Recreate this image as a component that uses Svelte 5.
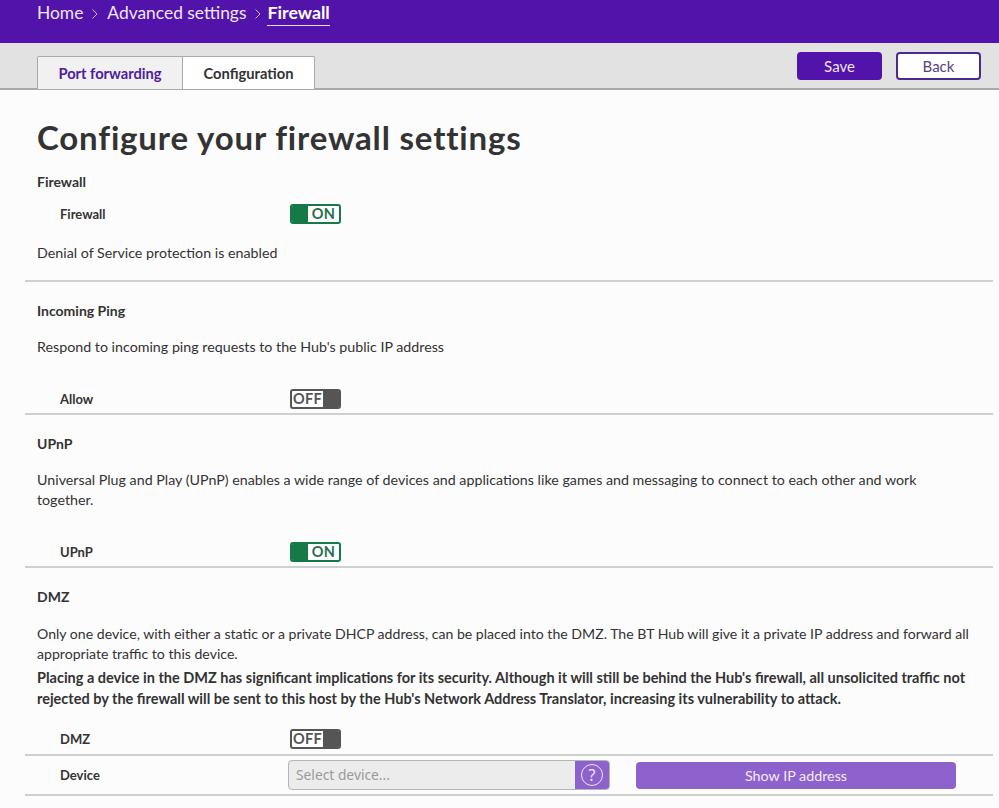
<script>
  const crumbs = ['Home', 'Advanced settings'];
</script>

<div class="page">
  <header class="top">
    <nav class="crumbs">
      {#each crumbs as c}
        <span class="crumb">{c}</span>
        <svg class="chev" width="8" height="12" viewBox="0 0 8 12"><path d="M1.5 1.5 6 6l-4.500 4.500" fill="none" stroke="#c9b3e8" stroke-width="1"/></svg>
      {/each}
      <span class="crumb current">Firewall</span>
    </nav>
  </header>

  <div class="tabbar">
    <div class="tabs">
      <div class="tab inactive">Port forwarding</div>
      <div class="tab active">Configuration</div>
    </div>
    <div class="actions">
      <button class="btn save">Save</button>
      <button class="btn back">Back</button>
    </div>
  </div>

  <main>
    <h1>Configure your firewall settings</h1>

    <section class="s1">
      <h2 class="h-first">Firewall</h2>
      <div class="row r-firewall">
        <span class="label">Firewall</span>
        <span class="toggle on"><i></i><b>ON</b></span>
      </div>
      <p class="dos">Denial of Service protection is enabled</p>
    </section>

    <section class="s2">
      <h2>Incoming Ping</h2>
      <p>Respond to incoming ping requests to the Hub's public IP address</p>
      <div class="row">
        <span class="label">Allow</span>
        <span class="toggle off"><b>OFF</b><i></i></span>
      </div>
    </section>

    <section class="s3">
      <h2>UPnP</h2>
      <p>Universal Plug and Play (UPnP) enables a wide range of devices and applications like games and messaging to connect to each other and work together.</p>
      <div class="row">
        <span class="label">UPnP</span>
        <span class="toggle on"><i></i><b>ON</b></span>
      </div>
    </section>

    <section class="s4">
      <h2>DMZ</h2>
      <p class="intro">Only one device, with either a static or a private DHCP address, can be placed into the DMZ. The BT Hub will give it a private IP address and forward all appropriate traffic to this device.</p>
      <p class="warn">Placing a device in the DMZ has significant implications for its security. Although it will still be behind the Hub's firewall, all unsolicited traffic not rejected by the firewall will be sent to this host by the Hub's Network Address Translator, increasing its vulnerability to attack.</p>
      <div class="row">
        <span class="label">DMZ</span>
        <span class="toggle off"><b>OFF</b><i></i></span>
      </div>
    </section>

    <section class="s5">
      <div class="row device">
        <span class="label">Device</span>
        <div class="select">
          <span class="ph">Select device...</span>
          <span class="help">
            <svg width="24" height="24" viewBox="0 0 24 24">
              <circle cx="12" cy="12" r="10.500" fill="none" stroke="#efe6fa" stroke-width="1"/>
              <text x="12" y="17.500" text-anchor="middle" class="q">?</text>
            </svg>
          </span>
        </div>
        <button class="btn show">Show IP address</button>
      </div>
    </section>
  </main>
</div>

<style>
  :global(body) {
    margin: 0;
    background: #fcfcfc;
  }
  .page {
    font-family: Lato, "Open Sans", sans-serif;
    color: #333;
    height: 808px;
    overflow: hidden;
  }
  .top {
    height: 43px;
    background: #5213aa;
    box-sizing: border-box;
    padding-left: 37px;
  }
  .crumbs {
    display: flex;
    align-items: flex-start;
    gap: 8px;
    color: #efe6fa;
    font-size: 17.400px;
    line-height: 25px;
  }
  .chev {
    margin-top: 8px;
  }
  .crumb.current {
    color: #fff;
    font-weight: 700;
    font-size: 17.800px;
    border-bottom: 1px solid #e6dcf5;
    height: 25px;
    margin-left: -3px;
  }
  .tabbar {
    height: 47px;
    box-sizing: border-box;
    background: #e2e2e2;
    border-bottom: 2px solid #a9a9a9;
    padding-left: 37px;
    display: flex;
    justify-content: space-between;
  }
  .tabs {
    display: flex;
    padding-top: 13px;
    height: 32px;
  }
  .tab {
    height: 32px;
    border: 1px solid #a9a9a9;
    border-bottom: none;
    font-size: 14.700px;
    font-weight: 700;
    line-height: 32px;
    text-align: center;
  }
  .tab.inactive {
    width: 144px;
    background: #f1f1f1;
    color: #4f1ba0;
    border-radius: 2px 0 0 0;
  }
  .tab.active {
    width: 131px;
    background: #fff;
    color: #333;
    border-left: none;
    border-radius: 0 2px 0 0;
  }
  .actions {
    display: flex;
    gap: 14px;
    padding: 9px 18px 0 0;
    align-items: flex-start;
  }
  .btn {
    font-family: inherit;
    font-size: 15px;
    border-radius: 4px;
    box-sizing: border-box;
    padding: 0;
    height: 28px;
    width: 85px;
  }
  .save {
    background: #5213aa;
    border: none;
    color: #efe6fa;
  }
  .back {
    background: #fff;
    border: 2px solid #4a2a8c;
    color: #55437f;
  }
  h1 {
    margin: 0;
    padding: 28px 0 0 37px;
    font-size: 33px;
    line-height: 38px;
    font-weight: 700;
    color: #333;
    letter-spacing: 0.83px;
  }
  section {
    margin-left: 25px;
    margin-right: 6px;
    padding-left: 12px;
    box-sizing: border-box;
    border-bottom: 2px solid #cfcfcf;
  }
  h2 {
    margin: 0;
    font-size: 14px;
    line-height: 18px;
    font-weight: 700;
    color: #333;
    padding-top: 20px;
  }
  h2.h-first {
    padding-top: 17px;
  }
  p {
    margin: 0;
    font-size: 14.250px;
    line-height: 20px;
    color: #333;
  }
  .s1 { height: 126px; }
  .s1 .r-firewall { margin-top: 11px; height: 24px; }
  .dos { margin-top: 17px; }
  .s2 { height: 133px; }
  .s2 p { margin-top: 17px; }
  .s2 .row { margin-top: 31px; }
  .s3 { height: 153px; }
  .s3 p { margin-top: 17px; padding-right: 60px; }
  .s3 .row { margin-top: 31px; }
  .s4 { height: 188px; }
  .s4 p.intro { margin-top: 18px; font-size: 14.100px; }
  .s4 p.warn { margin-top: 3px; font-weight: 700; font-size: 14.500px; line-height: 21px; padding-right: 16px; }
  .s4 .row { margin-top: 19px; }
  .s5 { height: 40px; }
  .row {
    display: flex;
    align-items: center;
    height: 22px;
    padding-left: 23px;
  }
  .label {
    width: 230px;
    font-size: 13px;
    font-weight: 700;
    color: #333;
    flex: none;
  }
  .toggle {
    display: inline-flex;
    width: 51px;
    height: 20px;
    box-sizing: border-box;
    border-radius: 3px;
    overflow: hidden;
    background: #fff;
    font-size: 14.500px;
    font-weight: 700;
    line-height: 16px;
    letter-spacing: 0.3px;
  }
  .toggle.on {
    border: 2px solid #157a45;
    color: #2c6e4c;
  }
  .toggle.off {
    border: 2px solid #555;
    color: #555;
  }
  .toggle i {
    display: block;
    width: 16px;
    flex: none;
  }
  .toggle.on i { background: #157a45; }
  .toggle.off i { background: #555; }
  .toggle b {
    flex: 1;
    text-align: center;
    font-weight: 700;
  }
  .device {
    height: 38px;
  }
  .device .label { width: 228px; }
  .select {
    width: 322px;
    height: 30px;
    flex: none;
    box-sizing: border-box;
    border: 1px solid #b5b5b5;
    border-radius: 4px;
    background: #ececec;
    display: flex;
    justify-content: space-between;
    overflow: hidden;
  }
  .ph {
    font-family: "Noto Sans", sans-serif;
    font-size: 13.800px;
    line-height: 27px;
    padding-left: 7px;
    color: #9a9a9a;
  }
  .help {
    width: 34px;
    background: #8e62cc;
    display: flex;
    align-items: center;
    justify-content: center;
  }
  .q {
    font-family: "Noto Sans", sans-serif;
    font-size: 16px;
    fill: #efe6fa;
  }
  .show {
    background: #8e62cc;
    border: none;
    color: #f3ecfb;
    width: 320px;
    height: 27px;
    margin-left: 26px;
    font-size: 14.300px;
  }
</style>
